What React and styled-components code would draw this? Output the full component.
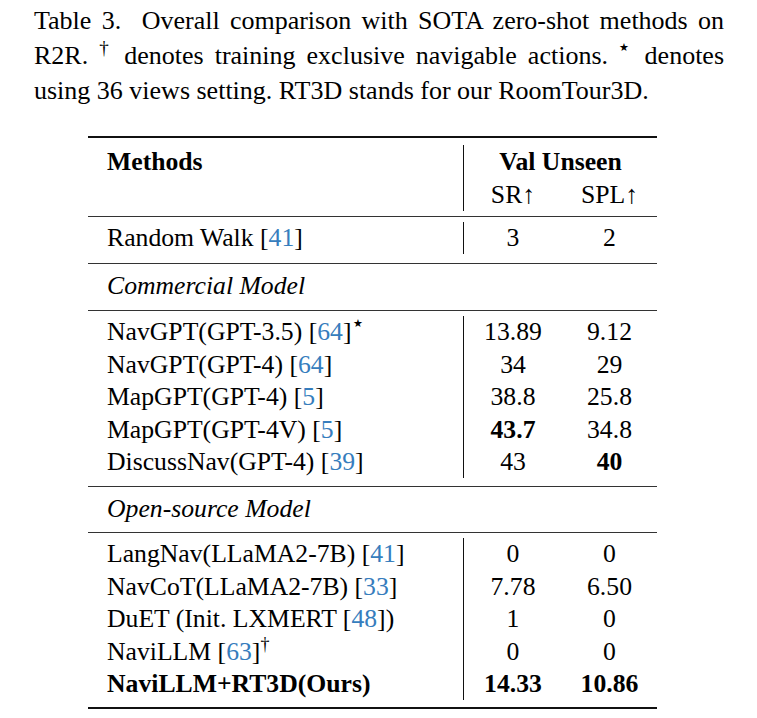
import React from 'react'
import styled, { createGlobalStyle } from 'styled-components'

const serif = '"Liberation Serif", "Times New Roman", Times, serif'

const GlobalStyle = createGlobalStyle`
  body {
    margin: 0;
    background: #fff;
    color: #000;
  }
  #root, #root * {
    font-family: ${serif} !important;
  }
`

const commercial = [
  { name: 'NavGPT(GPT-3.5)', cite: '64', star: true, sr: '13.89', spl: '9.12' },
  { name: 'NavGPT(GPT-4)', cite: '64', sr: '34', spl: '29' },
  { name: 'MapGPT(GPT-4)', cite: '5', sr: '38.8', spl: '25.8' },
  { name: 'MapGPT(GPT-4V)', cite: '5', sr: '43.7', spl: '34.8', bestSr: true },
  { name: 'DiscussNav(GPT-4)', cite: '39', sr: '43', spl: '40', bestSpl: true }
]

const openSource = [
  { name: 'LangNav(LLaMA2-7B)', cite: '41', sr: '0', spl: '0' },
  { name: 'NavCoT(LLaMA2-7B)', cite: '33', sr: '7.78', spl: '6.50' },
  { name: 'DuET (Init. LXMERT', cite: '48', tail: ')', sr: '1', spl: '0' },
  { name: 'NaviLLM', cite: '63', sup: '†', sr: '0', spl: '0' },
  { name: 'NaviLLM+RT3D(Ours)', sr: '14.33', spl: '10.86', ours: true }
]

function MethodName ({ row }) {
  return (
    <>
      {row.name}
      {row.cite && (
        <>
          {' '}[<Cite>{row.cite}</Cite>]
        </>
      )}
      {row.tail}
      {row.sup && <Sup>{row.sup}</Sup>}
      {row.star && <Star>★</Star>}
    </>
  )
}

function App () {
  return (
    <Page>
      <GlobalStyle />
      <Caption>
        <Line>Table 3.&nbsp; Overall comparison with SOTA zero-shot methods on</Line>
        <Line>R2R. <CapSup>†</CapSup> denotes training exclusive navigable actions. <CapStar>★</CapStar> denotes</Line>
        <LastLine>using 36 views setting. RT3D stands for our RoomTour3D.</LastLine>
      </Caption>

      <Table>
        <Rule $thick />
        <HeaderBlock>
          <MethodsHead>Methods</MethodsHead>
          <GroupHead>Val Unseen</GroupHead>
          <Metric>SR↑</Metric>
          <Metric>SPL↑</Metric>
        </HeaderBlock>
        <Rule />
        <Block $top={5} $bottom={9}>
          <Row>
            <NameCell>Random Walk [<Cite>41</Cite>]</NameCell>
            <Value>3</Value>
            <Value>2</Value>
          </Row>
        </Block>
        <Rule />
        <Block $top={6} $bottom={8}>
          <Group>Commercial Model</Group>
        </Block>
        <Rule />
        <Block $top={5} $bottom={8}>
          {commercial.map(row => (
            <Row key={row.name}>
              <NameCell><MethodName row={row} /></NameCell>
              <Value $bold={row.bestSr}>{row.sr}</Value>
              <Value $bold={row.bestSpl}>{row.spl}</Value>
            </Row>
          ))}
        </Block>
        <Rule />
        <Block $top={6} $bottom={7}>
          <Group>Open-source Model</Group>
        </Block>
        <Rule />
        <Block $top={5} $bottom={7}>
          {openSource.map(row => (
            <Row key={row.name}>
              <NameCell $bold={row.ours}><MethodName row={row} /></NameCell>
              <Value $bold={row.ours}>{row.sr}</Value>
              <Value $bold={row.ours}>{row.spl}</Value>
            </Row>
          ))}
        </Block>
        <Rule $thick />
      </Table>
    </Page>
  )
}

export default App

const Page = styled.div`
  width: 757px;
  height: 718px;
  overflow: hidden;
  background: #fff;
`

const Caption = styled.div`
  width: 690px;
  padding: 3px 0 0 34px;
  font-size: 26px;
  line-height: 35px;
`

const Line = styled.div`
  height: 35px;
  text-align: justify;
  text-align-last: justify;
  white-space: nowrap;
`

const LastLine = styled.div`
  text-align: left;
  white-space: nowrap;
`

const CapSup = styled.span`
  font-size: 19px;
  line-height: 0;
  position: relative;
  top: -10px;
`

const CapStar = styled.span`
  font-size: 11px;
  line-height: 0;
  position: relative;
  top: -13px;
`

const Table = styled.div`
  width: 569px;
  margin: 28px 0 0 88px;
  font-size: 25.7px;
`

const Rule = styled.div`
  height: ${p => (p.$thick ? 2 : 1)}px;
  background: ${p => (p.$thick ? '#111' : '#333')};
`

const HeaderBlock = styled.div`
  display: grid;
  grid-template-columns: 376px 98px 95px;
  grid-template-rows: 33px 33px;
  line-height: 33px;
  padding: 7px 0 5px;
`

const MethodsHead = styled.div`
  grid-row: 1 / 3;
  padding-left: 19px;
  font-weight: bold;
  border-right: 1px solid #111;
`

const GroupHead = styled.div`
  grid-column: 2 / 4;
  text-align: center;
  font-weight: bold;
`

const Metric = styled.div`
  text-align: center;
`

const Block = styled.div`
  padding: ${p => p.$top}px 0 ${p => p.$bottom}px;
`

const Row = styled.div`
  display: grid;
  grid-template-columns: 376px 98px 95px;
  grid-auto-rows: 32.4px;
  line-height: 32.4px;
`

const NameCell = styled.div`
  padding-left: 19px;
  border-right: 1px solid #111;
  white-space: nowrap;
  font-weight: ${p => (p.$bold ? 'bold' : 'normal')};
`

const Value = styled.div`
  text-align: center;
  font-weight: ${p => (p.$bold ? 'bold' : 'normal')};
`

const Group = styled.div`
  padding-left: 19px;
  font-style: italic;
  line-height: 32px;
`

const Cite = styled.span`
  color: #367dbd;
`

const Sup = styled.sup`
  font-size: 18px;
  line-height: 0;
  vertical-align: 0;
  position: relative;
  top: -10px;
  font-weight: normal;
`

const Star = styled.span`
  font-size: 11px;
  line-height: 0;
  position: relative;
  top: -13px;
  margin-left: 1px;
`
